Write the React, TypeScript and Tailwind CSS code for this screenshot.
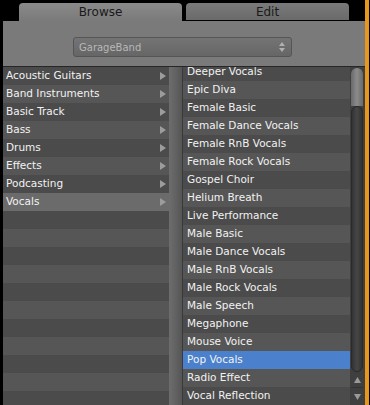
import React from 'react'

const categories = [
  'Acoustic Guitars',
  'Band Instruments',
  'Basic Track',
  'Bass',
  'Drums',
  'Effects',
  'Podcasting',
  'Vocals',
]

const presets = [
  'Deeper Vocals',
  'Epic Diva',
  'Female Basic',
  'Female Dance Vocals',
  'Female RnB Vocals',
  'Female Rock Vocals',
  'Gospel Choir',
  'Helium Breath',
  'Live Performance',
  'Male Basic',
  'Male Dance Vocals',
  'Male RnB Vocals',
  'Male Rock Vocals',
  'Male Speech',
  'Megaphone',
  'Mouse Voice',
  'Pop Vocals',
  'Radio Effect',
  'Vocal Reflection',
]

const font = { fontFamily: '"DejaVu Sans", "Noto Sans", sans-serif' }

function Arrow() {
  return (
    <svg width="6" height="8" viewBox="0 0 6 8" className="shrink-0">
      <path d="M0 0 L6 4 L0 8 Z" fill="#9c9c9c" />
    </svg>
  )
}

export default function App() {
  return (
    <div className="w-[370px] h-[405px] bg-black flex overflow-hidden text-[10.5px]" style={font}>
      <div className="w-[362px] ml-[3px] flex flex-col">
        {/* Tabs */}
        <div className="h-[21px] flex items-end pl-[16px] gap-[4px] shrink-0">
          <div className="w-[163px] h-[18px] rounded-t-[4px] bg-gradient-to-b from-[#8a8a8a] to-[#7a7a7a] flex items-center justify-center text-[12px] text-[#1a1a1a]">
            Browse
          </div>
          <div className="w-[163px] h-[17px] mb-[1px] rounded-t-[4px] bg-gradient-to-b from-[#7a7a7a] to-[#6a6a6a] flex items-center justify-center text-[12px] text-[#1a1a1a]">
            Edit
          </div>
        </div>

        {/* Header with dropdown */}
        <div className="h-[46px] bg-[#7a7a7a] pt-[16px] pl-[70px] shrink-0 border-b border-[#262626]">
          <div className="w-[219px] h-[20px] rounded-[3px] border border-[#555] bg-gradient-to-b from-[#747474] to-[#666] flex items-center pl-[5px] pr-[6px] text-[10px] text-[#b8b8b8]">
            <span className="flex-1">GarageBand</span>
            <svg width="6" height="10" viewBox="0 0 6 10">
              <path d="M0 4 L3 0 L6 4 Z M0 6 L3 10 L6 6 Z" fill="#b0b0b0" />
            </svg>
          </div>
        </div>

        {/* Lists */}
        <div className="flex-1 flex min-h-0">
          {/* Left column */}
          <div className="w-[166px] bg-[#4c4c4c] flex flex-col overflow-hidden">
            {Array.from({ length: 19 }).map((_, i) => {
              const name = categories[i]
              const bg = i === 7 ? 'bg-[#6b6b6b]' : i % 2 === 0 ? 'bg-[#4b4b4b]' : 'bg-[#565656]'
              return (
                <div key={i} className={`h-[18px] shrink-0 flex items-center pl-[3px] pr-[3px] ${bg}`}>
                  {name && (
                    <>
                      <span className="flex-1 text-[#f2f2f2]">{name}</span>
                      <Arrow />
                    </>
                  )}
                </div>
              )
            })}
          </div>
          <div className="w-[14px] bg-gradient-to-r from-[#6d6d6d] via-[#626262] to-[#555] border-r border-[#3a3a3a]" />

          {/* Right column */}
          <div className="w-[167px] overflow-hidden bg-[#4c4c4c]">
            <div className="mt-[-4px] flex flex-col">
              {presets.map((p, i) => {
                const bg = i === 16 ? 'bg-[#4a80cc]' : i % 2 === 0 ? 'bg-[#4b4b4b]' : 'bg-[#565656]'
                return (
                  <div key={p} className={`h-[18px] shrink-0 flex items-center pl-[4px] text-[#f2f2f2] ${bg}`}>
                    {p}
                  </div>
                )
              })}
            </div>
          </div>

          {/* Scrollbar */}
          <div className="w-[15px] bg-[#3f3f3f] flex flex-col items-center pl-[1px] pr-[2px]">
            <div className="w-full h-[38px] mt-[1px] rounded-t-full bg-gradient-to-r from-[#6a6a6a] via-[#8c8c8c] to-[#6a6a6a]" />
            <div className="w-full flex-1 rounded-full bg-gradient-to-r from-[#333] via-[#464646] to-[#333] border border-[#2a2a2a]" />
            <div className="w-full h-[16px] flex items-center justify-center border-b border-[#333]">
              <svg width="7" height="6" viewBox="0 0 7 6"><path d="M0 6 L3.5 0 L7 6 Z" fill="#9a9a9a" /></svg>
            </div>
            <div className="w-full h-[17px] flex items-center justify-center">
              <svg width="7" height="6" viewBox="0 0 7 6"><path d="M0 0 L3.5 6 L7 0 Z" fill="#9a9a9a" /></svg>
            </div>
          </div>
        </div>
      </div>
      <div className="w-[4px] bg-[#e8961e]" />
      <div className="w-[1px] bg-black" />
    </div>
  )
}
